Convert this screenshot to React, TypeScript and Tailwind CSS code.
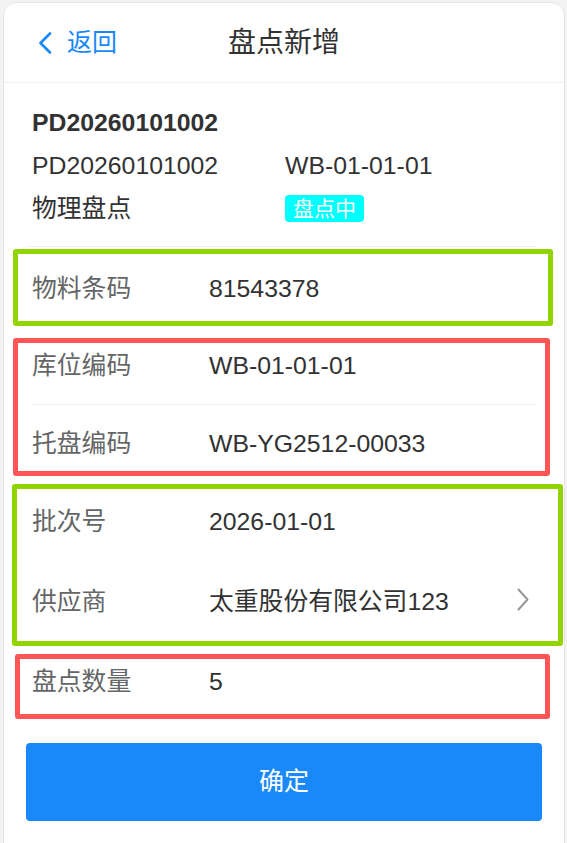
import React from 'react';

const font = { fontFamily: '"Liberation Sans", "Noto Sans CJK SC", sans-serif' };

const Row = ({ label, value, className = '' }: { label: string; value: string; className?: string }) => (
  <div className={`flex items-center h-[30px] text-[24.8px] leading-[30px] ${className}`}>
    <span className="w-[177px] shrink-0 text-[#646566]">{label}</span>
    <span className="text-[#323233]">{value}</span>
  </div>
);

export default function App() {
  return (
    <div className="h-screen overflow-hidden bg-[#f3f3f3] pt-[2px] pl-[3px] pr-[2px]" style={font}>
      <div className="h-[845px] bg-white border border-[#e6e6e6] rounded-t-[14px]">
        {/* Nav bar */}
        <div className="grid grid-cols-[1fr_auto_1fr] items-center h-[80px] border-b border-[#f0f0f0]">
          <div className="flex items-center pl-[34px] text-[#1989fa]">
            <svg width="14" height="22" viewBox="0 0 14 22" fill="none">
              <path d="M12 1.5 L2.5 11 L12 20.5" stroke="#1989fa" strokeWidth="2.6" strokeLinecap="round" strokeLinejoin="round" />
            </svg>
            <span className="ml-[15px] text-[25px] leading-none">返回</span>
          </div>
          <div className="text-[28px] text-[#323233] leading-none">盘点新增</div>
          <div />
        </div>

        {/* Order info */}
        <div className="pt-[18px] pb-[16px] pl-[28px] text-[24.8px] text-[#323233]">
          <div className="h-[43px] leading-[43px] font-bold">PD20260101002</div>
          <div className="flex h-[43px] leading-[43px]">
            <span className="w-[253px]">PD20260101002</span>
            <span>WB-01-01-01</span>
          </div>
          <div className="flex items-center h-[43px]">
            <span className="w-[253px]">物理盘点</span>
            <span className="h-[27px] px-[8px] rounded-[4px] bg-[#00ffff] text-white text-[21px] leading-[27px]">盘点中</span>
          </div>
        </div>
        <div className="ml-[24px] w-[509px] h-px bg-[#efefef]" />

        {/* Fields */}
        <div className="mt-[2px] flex flex-col">
          <div className="ml-[9px] w-[540px] h-[77px] border-[5px] border-[#92d400] rounded-[3px] pt-[20px] pl-[14px]">
            <Row label="物料条码" value="81543378" />
          </div>

          <div className="mt-[12px] ml-[9px] w-[537px] h-[138px] border-[5px] border-[#ff5555] rounded-[3px]">
            <div className="h-[61px] pt-[8px] pl-[14px]">
              <Row label="库位编码" value="WB-01-01-01" />
            </div>
            <div className="ml-[14px] mr-[8px] h-px bg-[#f0f0f0]" />
            <div className="pt-[24px] pl-[14px]">
              <Row label="托盘编码" value="WB-YG2512-00033" />
            </div>
          </div>

          <div className="mt-[8px] ml-[8px] w-[551px] h-[162px] border-[5px] border-[#92d400] rounded-[3px]">
            <div className="h-[80px] pt-[18px] pl-[15px]">
              <Row label="批次号" value="2026-01-01" />
            </div>
            <div className="flex items-start h-[72px] pt-[18px] pl-[15px] pr-[29px]">
              <Row label="供应商" value="太重股份有限公司123" className="flex-1" />
              <svg className="mt-[1px]" width="12" height="23" viewBox="0 0 12 23" fill="none">
                <path d="M1.5 1.5 L10.5 11.5 L1.5 21.5" stroke="#969799" strokeWidth="2" strokeLinecap="round" strokeLinejoin="round" />
              </svg>
            </div>
          </div>

          <div className="mt-[8px] ml-[11px] w-[535px] h-[65px] border-[5px] border-[#ff5555] rounded-[3px] pt-[8px] pl-[12px]">
            <Row label="盘点数量" value="5" />
          </div>
        </div>

        {/* Submit */}
        <button className="mt-[24px] ml-[22px] w-[516px] h-[78px] rounded-[4px] bg-[#1989fa] text-white text-[25px]">
          确定
        </button>
      </div>
    </div>
  );
}
